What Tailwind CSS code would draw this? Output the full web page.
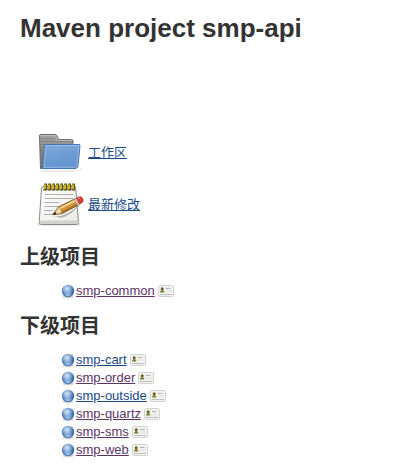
<!DOCTYPE html>
<html lang="zh-CN">
<head>
<meta charset="utf-8">
<meta name="viewport" content="width=device-width, initial-scale=1">
<title>Maven project smp-api</title>
<script src="https://cdn.jsdelivr.net/npm/@tailwindcss/browser@4"></script>
</head>
<body class="bg-white text-[#333333] text-[13px] leading-[18px] font-['Liberation_Sans','Noto_Sans_CJK_SC',sans-serif]">
<svg width="0" height="0" class="absolute" aria-hidden="true">
  <defs>
    <radialGradient id="ballFill" cx=".42" cy=".32" r=".7">
      <stop offset="0" stop-color="#dbe8f6"/><stop offset=".35" stop-color="#93b6dd"/><stop offset=".7" stop-color="#4472b0"/><stop offset="1" stop-color="#2d5690"/>
    </radialGradient>
    <radialGradient id="ballGlow" cx=".5" cy=".9" r=".5">
      <stop offset="0" stop-color="#b4d3f2" stop-opacity=".9"/><stop offset="1" stop-color="#a9cbee" stop-opacity="0"/>
    </radialGradient>
    <symbol id="ball" viewBox="0 0 16 16">
      <ellipse cx="8" cy="14" rx="5.5" ry="1.400" fill="#000" opacity=".15"/>
      <circle cx="8" cy="8" r="6.200" fill="url(#ballFill)"/>
      <circle cx="8" cy="8" r="5.600" fill="url(#ballGlow)"/>
    </symbol>
    <symbol id="card" viewBox="0 0 16 16">
      <rect x=".5" y="2.500" width="15" height="11" rx="1.200" fill="#f1f1ef" stroke="#d3d3d0"/>
      <circle cx="4.200" cy="5.800" r="1.500" fill="#7a5a1c"/>
      <path d="M2 9.600c0-3.400 4.400-3.400 4.400 0z" fill="#74842c"/>
      <path d="M8 5.500h5" stroke="#aaa" stroke-dasharray="2 .5"/>
      <path d="M7.500 8h6" stroke="#dededc" stroke-width=".8"/>
      <path d="M2 11.500h12" stroke="#b4b4b2" stroke-dasharray="1.600 .4"/>
    </symbol>
  </defs>
</svg>
<main class="px-5 pt-3">
  <h1 class="text-[26px] leading-8 font-bold">Maven project smp-api</h1>

  <nav class="mt-[85px] pl-4 flex flex-col gap-1">
    <div class="flex items-center gap-1">
      <svg class="size-12 shrink-0" viewBox="0 0 48 48" aria-hidden="true">
        <defs>
          <linearGradient id="folderBack" x2="0" y2="1"><stop stop-color="#a3a3a3"/><stop offset="1" stop-color="#707070"/></linearGradient>
          <linearGradient id="folderFront" x2=".3" y2="1"><stop stop-color="#84addd"/><stop offset=".5" stop-color="#6f9dd3"/><stop offset="1" stop-color="#6594cd"/></linearGradient>
        </defs>
        <path d="M2 41h40l4-3v3l-7 2H6z" fill="#000" opacity=".08"/>
        <path d="M4.500 39.500 3.500 7q0-1.500 1.500-1.500h14q1.500 0 2 1.500l1.500 3.500h13q1.500 0 1.500 1.500v27.500z" fill="url(#folderBack)" stroke="#6b6b6b"/>
        <path d="M4.500 6.500h15l2 5h14.500" fill="none" stroke="#c9c9c9" stroke-opacity=".7"/>
        <path d="M4 9.500h15M4 12.500h32M4 15.500h5M4 18.500h4M4 21.500h4M4 24.500h4M4 27.500h3M4 30.500h3M4 33.500h3" stroke="#666" opacity=".4"/>
        <path d="M7.500 39.500q-1 0-.8-1.300L8.500 17.500q.2-2 2-2H43q1.200 0 1 1.500L42 36.500q-.3 3-3 3z" fill="url(#folderFront)" stroke="#4274b3"/>
        <path d="M8 38.400 9.600 18.100q.1-1.600 1.600-1.600H42.800L41 36.300q-.2 2-2 2z" fill="none" stroke="#b4d0ef" stroke-opacity=".55"/>
      </svg>
      <a href="#workspace" class="underline text-[#204a87]">工作区</a>
    </div>
    <div class="flex items-center gap-1">
      <svg class="size-12 shrink-0" viewBox="0 0 48 48" aria-hidden="true">
        <defs>
          <linearGradient id="pencilFill" gradientUnits="userSpaceOnUse" x1="27" y1="22" x2="31" y2="30"><stop stop-color="#f3cf85"/><stop offset=".5" stop-color="#dfa34a"/><stop offset="1" stop-color="#a5691c"/></linearGradient>
          <linearGradient id="paperFill" x2="1" y2="1"><stop stop-color="#fff"/><stop offset="1" stop-color="#e9e9e7"/></linearGradient>
        </defs>
        <path d="M2 42q20 4 42 0v2.500H2z" fill="#000" opacity=".15"/>
        <path d="M7 5.500h31q1.500 0 1.700 2L42.500 41q.2 2.500-2.500 2.500H5.500q-2.500 0-2.300-2.500L5.500 7.500q.1-2 1.500-2z" fill="url(#paperFill)" stroke="#8b8c88"/>
        <path d="M4 39.500h38l.4 2q0 1.600-2.400 1.600H5.500q-1.900 0-1.800-1.600z" fill="#d2d2cf"/>
        <path d="M9 13.500h28M9 17.500h28M8.500 21.500h14M8.500 25.500h14M8 29.500h9M8 33.500h10" stroke="#aeaeac"/>
        <path d="M7 8.500h32" stroke="#8b8970" stroke-width="1.500"/>
        <path d="M9.500 4v4M13.500 4v4M17.500 4v4M21.500 4v4M25.500 4v4M29.500 4v4M33.500 4v4M37.500 4v4" stroke="#5d5012" stroke-width="3.400" stroke-linecap="round"/>
        <path d="M9 4v3.500M13 4v3.500M17 4v3.500M21 4v3.500M25 4v3.500M29 4v3.500M33 4v3.500M37 4v3.500" stroke="#dcc52b" stroke-width="1.700" stroke-linecap="round"/>
        <path d="M17 35q12 2 26-11-7 10-18 13z" fill="#000" opacity=".25"/>
        <path d="M17 33.500 22.500 26 39.500 17.700l3.300 6L26 32.500z" fill="url(#pencilFill)" stroke="#80500f"/>
        <path d="M17 33.500 22.500 26q3.500 1.500 3.500 6.500z" fill="#eed8ac" stroke="#946426" stroke-width=".7"/>
        <path d="m16.500 33.900 2.300-3.200 1.800 2.200z" fill="#222"/>
        <path d="m24 27.200 15-7.600" stroke="#fae3ae" stroke-width="1.200"/>
        <path d="m38.500 18.200 3.100 6 2-1.200-3-5.700z" fill="#d5d5d0" stroke="#888" stroke-width=".5"/>
        <path d="m40.600 17.300 3 5.700 2.200-1.300q2-1.300.9-4-1.300-2.700-3.700-1.700z" fill="#df3f34" stroke="#a31f19" stroke-width=".8"/>
        <path d="m42 17.700 2-.9" stroke="#f5a49d"/>
      </svg>
      <a href="#changes" class="underline text-[#204a87]">最新修改</a>
    </div>
  </nav>

  <section class="mt-3">
    <h2 class="text-[20px] leading-8 font-bold">上级项目</h2>
    <ul class="mt-[9px] pl-10">
      <li class="flex items-center"><svg class="size-4" aria-hidden="true"><use href="#ball"/></svg><a href="#smp-common" class="underline text-[#5c3566]">smp-common</a><svg class="ml-[3px] size-4" aria-hidden="true"><use href="#card"/></svg></li>
    </ul>
  </section>

  <section class="mt-[10px]">
    <h2 class="text-[20px] leading-8 font-bold">下级项目</h2>
    <ul class="mt-[9px] pl-10">
      <li class="flex items-center"><svg class="size-4" aria-hidden="true"><use href="#ball"/></svg><a href="#smp-cart" class="underline text-[#204a87]">smp-cart</a><svg class="ml-[3px] size-4" aria-hidden="true"><use href="#card"/></svg></li>
      <li class="flex items-center"><svg class="size-4" aria-hidden="true"><use href="#ball"/></svg><a href="#smp-order" class="underline text-[#5c3566]">smp-order</a><svg class="ml-[3px] size-4" aria-hidden="true"><use href="#card"/></svg></li>
      <li class="flex items-center"><svg class="size-4" aria-hidden="true"><use href="#ball"/></svg><a href="#smp-outside" class="underline text-[#204a87]">smp-outside</a><svg class="ml-[3px] size-4" aria-hidden="true"><use href="#card"/></svg></li>
      <li class="flex items-center"><svg class="size-4" aria-hidden="true"><use href="#ball"/></svg><a href="#smp-quartz" class="underline text-[#5c3566]">smp-quartz</a><svg class="ml-[3px] size-4" aria-hidden="true"><use href="#card"/></svg></li>
      <li class="flex items-center"><svg class="size-4" aria-hidden="true"><use href="#ball"/></svg><a href="#smp-sms" class="underline text-[#5c3566]">smp-sms</a><svg class="ml-[3px] size-4" aria-hidden="true"><use href="#card"/></svg></li>
      <li class="flex items-center"><svg class="size-4" aria-hidden="true"><use href="#ball"/></svg><a href="#smp-web" class="underline text-[#5c3566]">smp-web</a><svg class="ml-[3px] size-4" aria-hidden="true"><use href="#card"/></svg></li>
    </ul>
  </section>
</main>
</body>
</html>
